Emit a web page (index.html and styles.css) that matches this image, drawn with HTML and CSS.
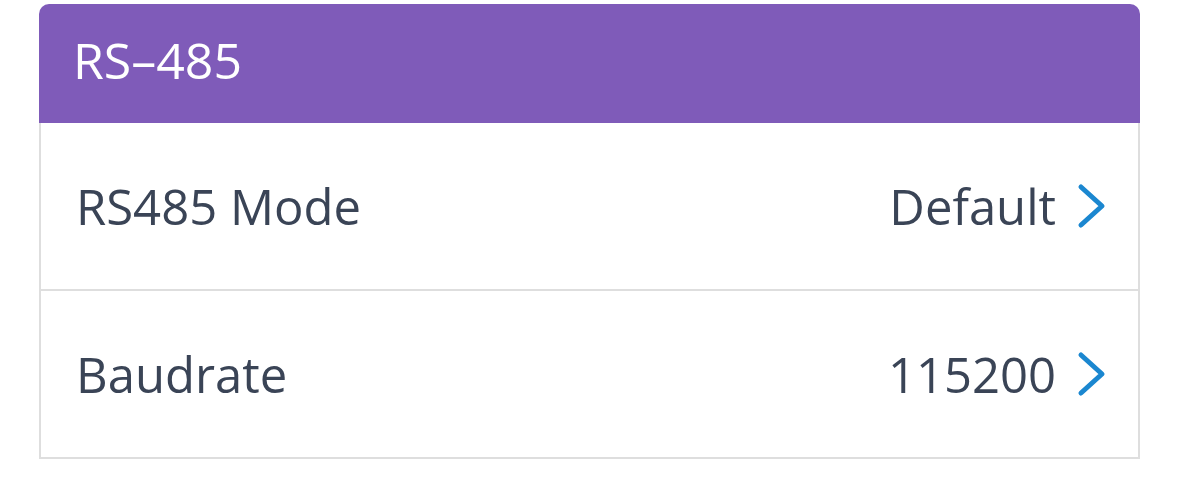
FILE: index.html
```html
<!DOCTYPE html>
<html lang="en">
<head>
  <meta charset="UTF-8">
  <title>RS-485</title>
  <link rel="stylesheet" href="styles.css">
</head>
<body>
  <section class="card">
    <div class="card-header">RS–485</div>

    <div class="setting-row">
      <span class="setting-label">RS485 Mode</span>
      <span class="setting-value">Default
        <svg class="chevron" viewBox="0 0 30 46" width="30" height="46"><path d="M4 4 L25 23 L4 42" fill="none" stroke="#1b87d0" stroke-width="5" stroke-linecap="round" stroke-linejoin="round"/></svg>
      </span>
    </div>

    <div class="setting-row">
      <span class="setting-label">Baudrate</span>
      <span class="setting-value">115200
        <svg class="chevron" viewBox="0 0 30 46" width="30" height="46"><path d="M4 4 L25 23 L4 42" fill="none" stroke="#1b87d0" stroke-width="5" stroke-linecap="round" stroke-linejoin="round"/></svg>
      </span>
    </div>
  </section>
</body>
</html>
```

FILE: styles.css
```css
* {
  margin: 0;
  padding: 0;
  box-sizing: border-box;
}

body {
  font-family: "Open Sans", "Noto Sans", sans-serif;
  background-color: #fff;
  padding: 4px 0 0 39px;
}

/* Card */
.card {
  width: 1101px;
  border-radius: 10px 10px 0 0;
  overflow: hidden;
}

.card-header {
  height: 119px;
  background-color: #7f5bb9;
  color: #fff;
  font-size: 50px;
  padding: 0 0 8px 34px;
  display: flex;
  align-items: center;
}

/* Rows */
.setting-row {
  height: 168px;
  display: flex;
  align-items: center;
  justify-content: space-between;
  padding: 0 31px 0 35px;
  border: 2px solid #dedede;
  border-top: none;
  color: #3a4456;
  font-size: 49px;
}

.setting-value {
  display: flex;
  align-items: center;
  gap: 21px;
}
```
